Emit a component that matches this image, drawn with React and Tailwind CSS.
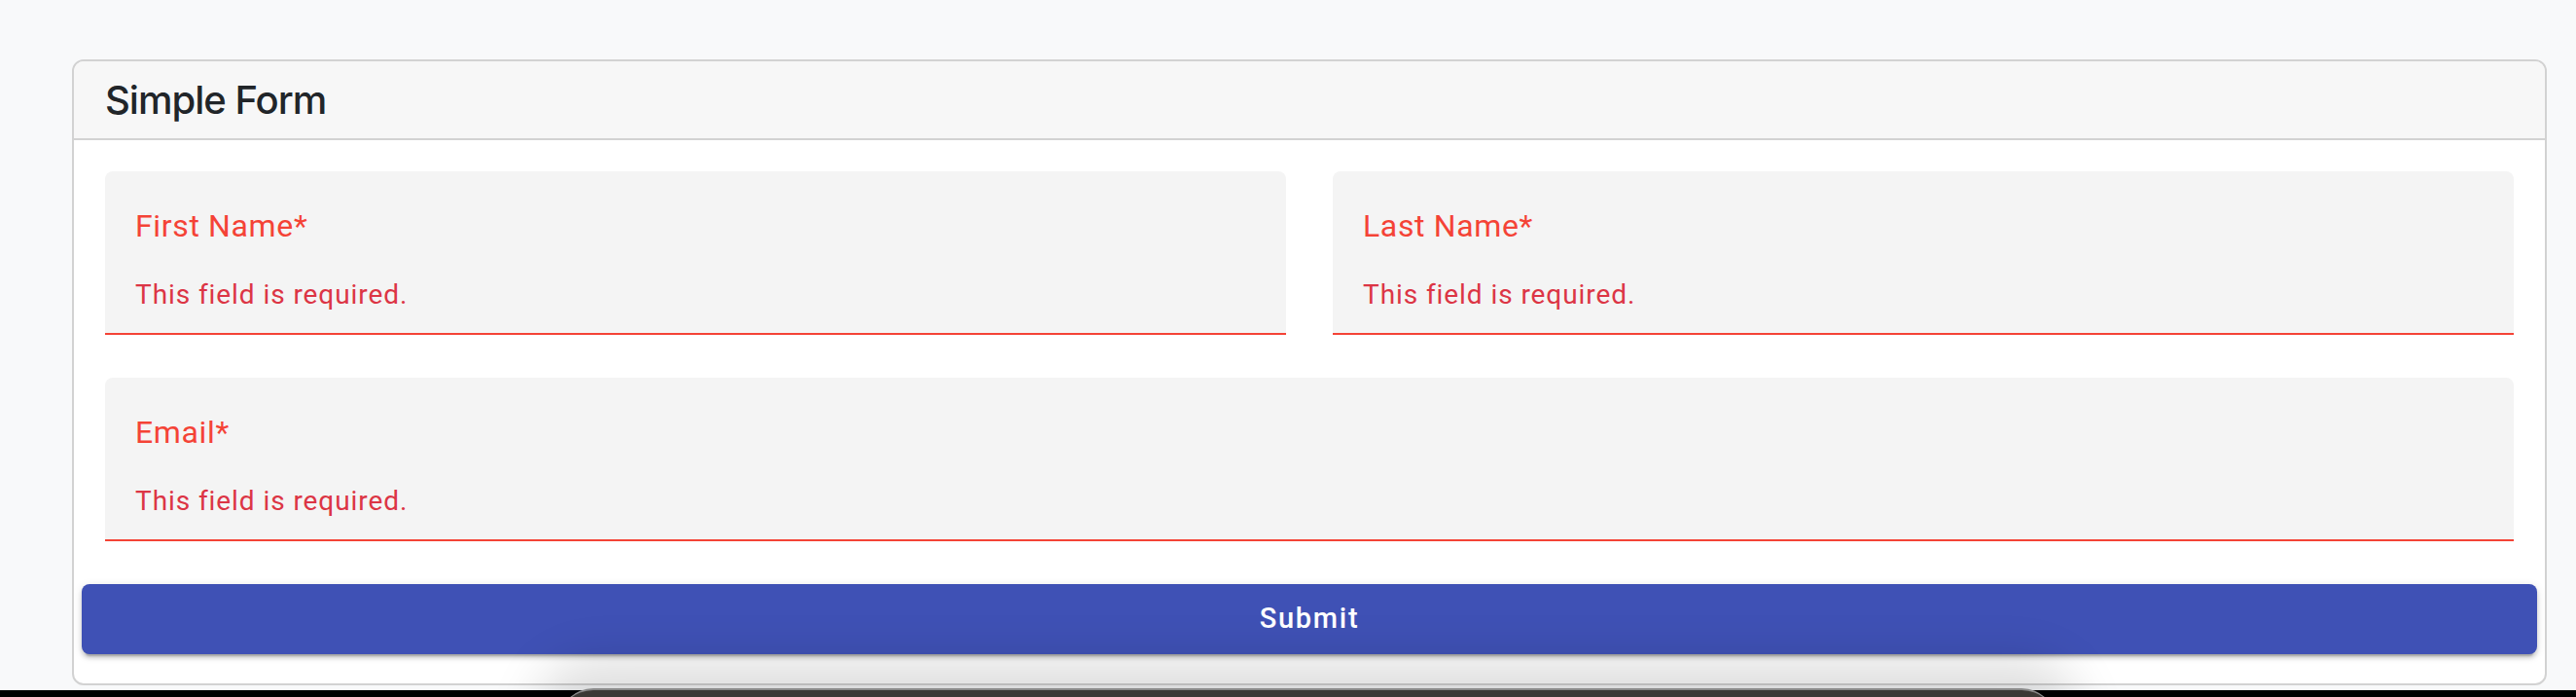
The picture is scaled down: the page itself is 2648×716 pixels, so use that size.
const ROBOTO = { fontFamily: "Roboto, 'Liberation Sans', sans-serif" };

function ErrorField({ label, className = "" }) {
  return (
    <div
      className={`box-border h-[168px] rounded-t-[8px] border-b-2 border-[#f44336] bg-[#f4f4f4] pl-[31px] pt-[40px] ${className}`}
      style={ROBOTO}
    >
      <div className="text-[32px] leading-[32px] tracking-[0.02em] text-[#f44336]">
        {label}*
      </div>
      <div className="mt-[41px] text-[28px] leading-[28px] tracking-[0.033em] text-[#dc3545]">
        This field is required.
      </div>
    </div>
  );
}

export default function App() {
  return (
    <div className="relative h-[716px] w-[2648px] overflow-hidden bg-[#f8f9fa]">
      <div className="pl-[74px] pt-[61px]">
        <div className="w-[2544px] overflow-hidden rounded-[12px] border-2 border-[#d2d2d2] bg-white">
          <div className="border-b-2 border-[#d2d2d2] bg-[#f7f7f7] px-[32px] pb-[15px] pt-[16px]">
            <h5
              className="text-[40px] font-medium leading-[48px] tracking-[-0.025em] text-[#212529]"
              style={{ fontFamily: "Inter, 'Liberation Sans', sans-serif" }}
            >
              Simple Form
            </h5>
          </div>

          <div className="px-[32px] pb-[30px] pt-[32px]">
            <div className="grid grid-cols-2 gap-x-[48px] gap-y-[44px]">
              <ErrorField label="First Name" />
              <ErrorField label="Last Name" />
              <ErrorField label="Email" className="col-span-2" />
            </div>

            <button
              type="button"
              className="mx-[-24px] mt-[44px] block h-[72px] w-[calc(100%+48px)] rounded-[8px] bg-[#3f51b5] text-[29px] font-medium tracking-[0.06em] text-white shadow-[0_6px_2px_-4px_rgba(0,0,0,0.2),0_4px_4px_0_rgba(0,0,0,0.14),0_2px_10px_0_rgba(0,0,0,0.12)]"
              style={ROBOTO}
            >
              Submit
            </button>
          </div>
        </div>
      </div>

      {/* desktop strip along the bottom edge */}
      <div className="absolute bottom-0 left-0 h-[7px] w-full bg-black" />
      <div className="absolute left-[574px] top-[707px] h-[40px] w-[1540px] rounded-t-[36px] border-t-2 border-[#8a8a8a] bg-[#3b3935] shadow-[0_-6px_50px_24px_rgba(0,0,0,0.13)]" />
    </div>
  );
}
